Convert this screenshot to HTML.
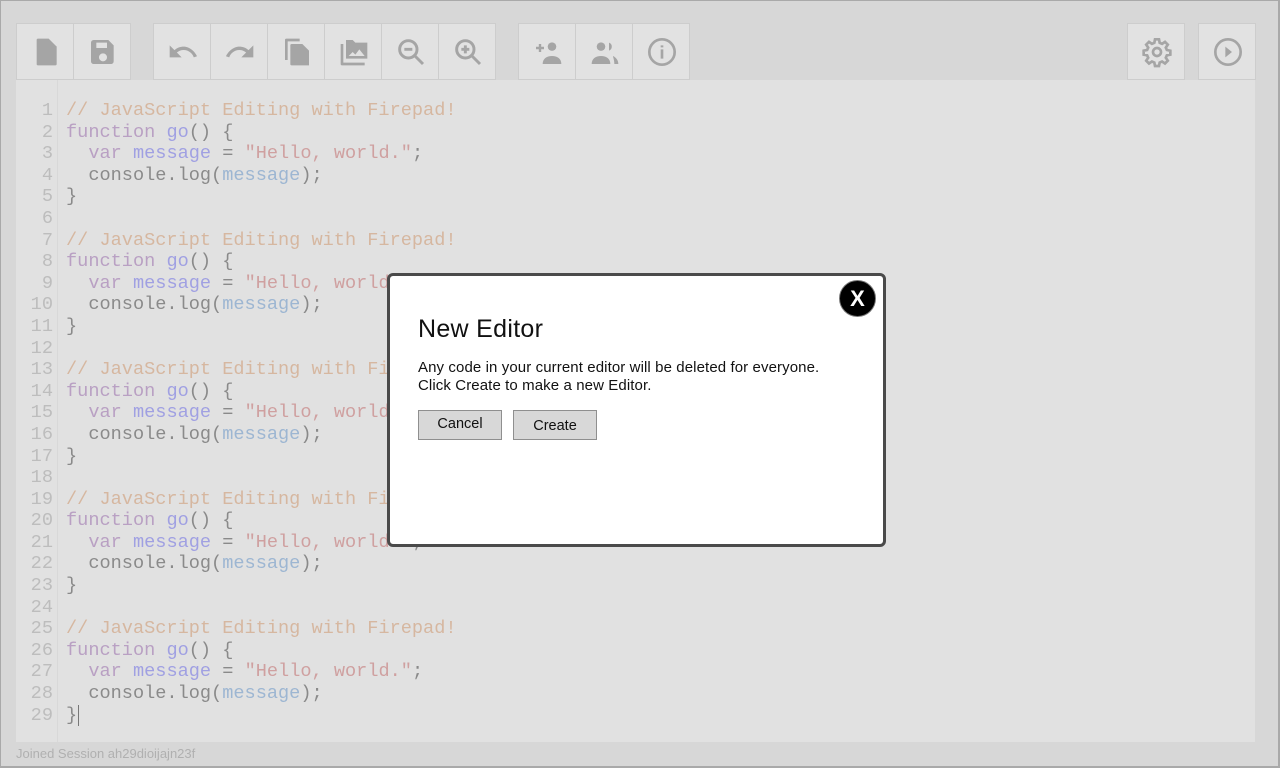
<!DOCTYPE html>
<html><head><meta charset="utf-8"><style>
*{margin:0;padding:0;box-sizing:border-box}
body{width:1280px;height:768px;background:#d7d7d7;position:relative;overflow:hidden;font-family:"Liberation Sans",sans-serif}
.frame{position:absolute;left:0;top:0;width:1280px;height:768px;border:1px solid #a9a9a9;border-right-width:2px;border-bottom-width:2px}
.btn{position:absolute;top:23px;width:58px;height:57px;background:#e2e2e2;border:1px solid #cdcdcd}
.btn svg{position:absolute;left:13px;top:12px;width:32px;height:32px}
.editor{position:absolute;left:16px;top:80px;width:1239px;height:662px;background:#e1e1e1}
.gutter{position:absolute;left:0;top:0;width:42px;height:662px;border-right:1px solid #d8d8d8}
.code{position:absolute;left:0;top:100px;font-family:"Liberation Mono",monospace;font-size:18.6px;line-height:21.6px;white-space:pre;color:#8a8a8a}
.ln{display:inline-block;width:37px;text-align:right;color:#bdbdbd;margin-right:13px}
.c{color:#d6b7a0}.k{color:#b9a0c3}.d{color:#a0a0e2}.s{color:#cfa0a0}.v{color:#9db6d2}
.status{position:absolute;left:16px;top:746px;font-size:13px;color:#b0b0b0}
.modal{position:absolute;left:387px;top:273px;width:499px;height:274px;background:#fff;border:3px solid #4a4a4a;border-radius:6px}
.modal h1{position:absolute;left:28px;top:39px;font-weight:normal;font-size:25px;color:#111;letter-spacing:0.3px}
.modal p{position:absolute;left:28px;top:83px;font-size:15px;line-height:18px;color:#111;letter-spacing:0.1px}
.mb{position:absolute;top:134px;width:84px;height:30px;background:#d8d8d8;border:1px solid #8f8f8f;font-size:14.5px;color:#111;text-align:center}
.x{position:absolute;left:449px;top:4px;width:37px;height:37px;border-radius:50%;background:#000;border:1px solid #777;color:#fff;font-weight:bold;font-size:22px;text-align:center;line-height:35px}
</style></head><body>
<div class="frame"></div>
<div class="btn" style="left:16px"><svg viewBox="0 0 24 24" fill="#a5a5a5"><path d="M6 2h8l6 6v13a1 1 0 0 1-1 1H6a1 1 0 0 1-1-1V3a1 1 0 0 1 1-1z"/></svg></div>
<div class="btn" style="left:73px"><svg viewBox="0 0 24 24" fill="#a5a5a5"><path d="M5 3h11l4 4v12a2 2 0 0 1-2 2H5a2 2 0 0 1-2-2V5a2 2 0 0 1 2-2zm2 2v4h8V5zm5 8a3 3 0 1 0 0 6 3 3 0 0 0 0-6z"/></svg></div>
<div class="btn" style="left:153px"><svg viewBox="0 0 24 24" fill="#a5a5a5"><path d="M12.5 8c-2.65 0-5.05 1-6.9 2.6L2 7v9h9l-3.6-3.6c1.4-1.2 3.2-1.9 5.1-1.9 3.5 0 6.5 2.3 7.6 5.5l2.4-.8C21 11.9 17.1 8 12.5 8z"/></svg></div>
<div class="btn" style="left:210px"><svg viewBox="0 0 24 24" fill="#a5a5a5"><path d="M11.5 8c2.65 0 5.050 1 6.9 2.6L22 7v9h-9l3.6-3.6c-1.4-1.2-3.2-1.9-5.1-1.9-3.5 0-6.5 2.3-7.6 5.5l-2.4-.8C3 11.9 6.9 8 11.5 8z"/></svg></div>
<div class="btn" style="left:267px"><svg viewBox="0 0 24 24" fill="#a5a5a5"><path d="M4 2h10v2H5v14H3V3a1 1 0 0 1 1-1zm4 4h8l5 5v11H8a1 1 0 0 1-1-1V7a1 1 0 0 1 1-1z"/></svg></div>
<div class="btn" style="left:324px"><svg viewBox="0 0 24 24" fill="#a5a5a5"><path d="M2 6h2v14h16v2H3a1 1 0 0 1-1-1zm4-3h5l2 2h9v12H6zm2 12h12l-4-5-3 4-2-2z"/></svg></div>
<div class="btn" style="left:381px"><svg viewBox="0 0 24 24" fill="none" stroke="#a5a5a5" stroke-width="2.2"><circle cx="10" cy="10" r="6.5"/><path d="M15 15l6 6M7 10h6"/></svg></div>
<div class="btn" style="left:438px"><svg viewBox="0 0 24 24" fill="none" stroke="#a5a5a5" stroke-width="2.2"><circle cx="10" cy="10" r="6.5"/><path d="M15 15l6 6M7 10h6M10 7v6"/></svg></div>
<div class="btn" style="left:518px"><svg viewBox="0 0 24 24" fill="#a5a5a5"><circle cx="15" cy="8" r="3.2"/><path d="M8 21c0-4 3-6 7-6s7 2 7 6z"/><path d="M3 9h6M6 6v6" stroke="#a5a5a5" stroke-width="1.8"/></svg></div>
<div class="btn" style="left:575px"><svg viewBox="0 0 24 24" fill="#a5a5a5"><circle cx="9" cy="8" r="3.2"/><path d="M2 21c0-4 3-6 7-6s7 2 7 6z"/><path d="M15 5a3.2 3.2 0 0 1 0 6zM18 15c2 1 4 3 4 6h-3c0-3-1-5-1-6z"/></svg></div>
<div class="btn" style="left:632px"><svg viewBox="0 0 24 24" fill="none" stroke="#a5a5a5" stroke-width="2"><circle cx="12" cy="12" r="9.5"/><path d="M12 10v7M12 7v1.5"/></svg></div>
<div class="btn" style="left:1127px"><svg viewBox="0 0 24 24" fill="none" stroke="#a5a5a5" stroke-width="2"><path d="M10.5 2.5h3l.5 2.6 1.8.8 2.2-1.5 2.1 2.1-1.5 2.2.8 1.8 2.6.5v3l-2.6.5-.8 1.8 1.5 2.2-2.1 2.1-2.2-1.5-1.8.8-.5 2.6h-3l-.5-2.6-1.8-.8-2.2 1.5-2.1-2.1 1.5-2.2-.8-1.8-2.6-.5v-3l2.6-.5.8-1.8-1.5-2.2 2.1-2.1 2.2 1.5 1.8-.8z"/><circle cx="12" cy="12" r="3"/></svg></div>
<div class="btn" style="left:1198px"><svg viewBox="0 0 24 24"><circle cx="12" cy="12" r="9.5" fill="none" stroke="#a5a5a5" stroke-width="2"/><path d="M10 8l5 4-5 4z" fill="#a5a5a5"/></svg></div>
<div class="editor"><div class="gutter"></div></div>
<div class="code" style="left:16px"><span class="ln">1</span><span class="c">// JavaScript Editing with Firepad!</span>
<span class="ln">2</span><span class="k">function</span> <span class="d">go</span>() {
<span class="ln">3</span>  <span class="k">var</span> <span class="d">message</span> = <span class="s">"Hello, world."</span>;
<span class="ln">4</span>  console.log(<span class="v">message</span>);
<span class="ln">5</span>}
<span class="ln">6</span>
<span class="ln">7</span><span class="c">// JavaScript Editing with Firepad!</span>
<span class="ln">8</span><span class="k">function</span> <span class="d">go</span>() {
<span class="ln">9</span>  <span class="k">var</span> <span class="d">message</span> = <span class="s">"Hello, world."</span>;
<span class="ln">10</span>  console.log(<span class="v">message</span>);
<span class="ln">11</span>}
<span class="ln">12</span>
<span class="ln">13</span><span class="c">// JavaScript Editing with Firepad!</span>
<span class="ln">14</span><span class="k">function</span> <span class="d">go</span>() {
<span class="ln">15</span>  <span class="k">var</span> <span class="d">message</span> = <span class="s">"Hello, world."</span>;
<span class="ln">16</span>  console.log(<span class="v">message</span>);
<span class="ln">17</span>}
<span class="ln">18</span>
<span class="ln">19</span><span class="c">// JavaScript Editing with Firepad!</span>
<span class="ln">20</span><span class="k">function</span> <span class="d">go</span>() {
<span class="ln">21</span>  <span class="k">var</span> <span class="d">message</span> = <span class="s">"Hello, world."</span>;
<span class="ln">22</span>  console.log(<span class="v">message</span>);
<span class="ln">23</span>}
<span class="ln">24</span>
<span class="ln">25</span><span class="c">// JavaScript Editing with Firepad!</span>
<span class="ln">26</span><span class="k">function</span> <span class="d">go</span>() {
<span class="ln">27</span>  <span class="k">var</span> <span class="d">message</span> = <span class="s">"Hello, world."</span>;
<span class="ln">28</span>  console.log(<span class="v">message</span>);
<span class="ln">29</span>}<span style="border-left:1px solid #777;margin-left:1px"></span></div>
<div class="status">Joined Session ah29dioijajn23f</div>
<div class="modal">
<div class="x">X</div>
<h1>New Editor</h1>
<p>Any code in your current editor will be deleted for everyone.<br>Click Create to make a new Editor.</p>
<div class="mb" style="left:28px;line-height:26px">Cancel</div>
<div class="mb" style="left:123px;line-height:30px">Create</div>
</div>
</body></html>
